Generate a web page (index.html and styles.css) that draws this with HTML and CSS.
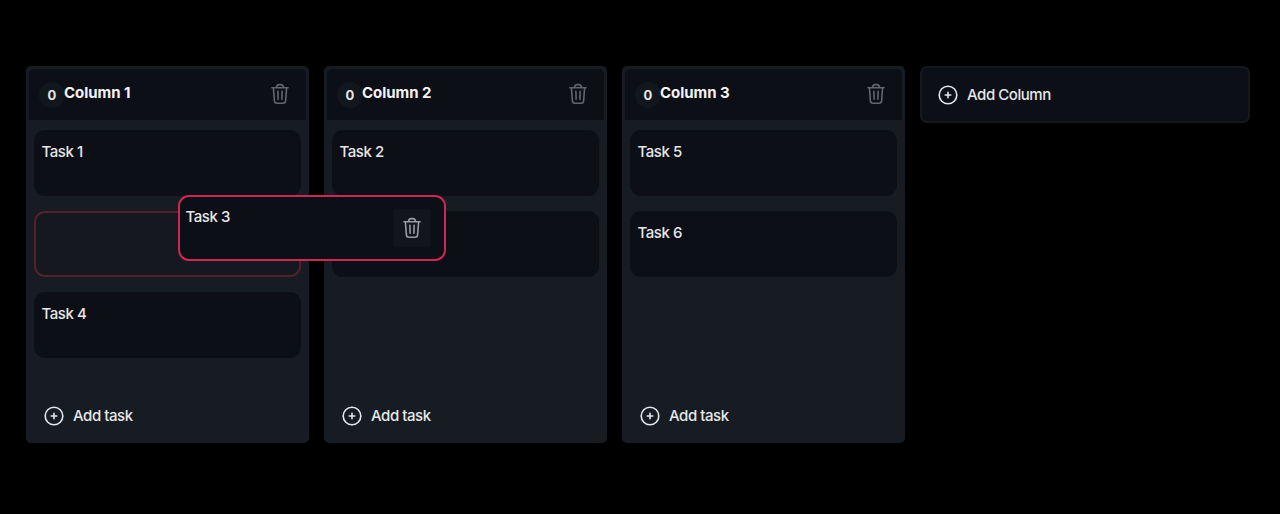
FILE: index.html
```html
<!DOCTYPE html>
<html lang="en">
<head>
<meta charset="utf-8">
<title>Kanban board</title>
<link rel="stylesheet" href="styles.css">
</head>
<body>
<svg class="sprite" aria-hidden="true">
  <symbol id="trash" viewBox="0 0 18 22">
    <path d="M1 4.8H17M2.4 5l1 12.9c.1 1.5.9 2.3 2.4 2.3h6.4c1.5 0 2.3-.8 2.4-2.3L15.6 5M5.4 4.6c.3-2 1.2-3 2.7-3h1.8c1.5 0 2.4 1 2.7 3M6.9 8.3l.2 8M11.1 8.3l-.2 8"/>
  </symbol>
  <symbol id="plus" viewBox="0 0 20 20">
    <circle cx="10" cy="10" r="8.8"/><path d="M10 7.2v5.6M7.2 10h5.6"/>
  </symbol>
</svg>
<main class="board">
  <section class="column">
    <header class="column-header">
      <span class="count">0</span><h2 class="title">Column 1</h2>
      <button class="delete" aria-label="Delete column"><svg class="trash"><use href="#trash"/></svg></button>
    </header>
    <div class="tasks">
      <article class="task">Task 1</article>
      <article class="task placeholder"></article>
      <article class="task">Task 4</article>
    </div>
    <button class="add-task"><svg class="plus"><use href="#plus"/></svg>Add task</button>
  </section>
  <section class="column">
    <header class="column-header">
      <span class="count">0</span><h2 class="title">Column 2</h2>
      <button class="delete" aria-label="Delete column"><svg class="trash"><use href="#trash"/></svg></button>
    </header>
    <div class="tasks">
      <article class="task">Task 2</article>
      <article class="task"></article>
    </div>
    <button class="add-task"><svg class="plus"><use href="#plus"/></svg>Add task</button>
  </section>
  <section class="column">
    <header class="column-header">
      <span class="count">0</span><h2 class="title">Column 3</h2>
      <button class="delete" aria-label="Delete column"><svg class="trash"><use href="#trash"/></svg></button>
    </header>
    <div class="tasks">
      <article class="task">Task 5</article>
      <article class="task">Task 6</article>
    </div>
    <button class="add-task"><svg class="plus"><use href="#plus"/></svg>Add task</button>
  </section>
  <button class="add-column"><svg class="plus"><use href="#plus"/></svg>Add Column</button>
</main>
<article class="task dragged">Task 3
  <button class="task-delete" aria-label="Delete task"><svg class="trash"><use href="#trash"/></svg></button>
</article>
</body>
</html>
```

FILE: styles.css
```css
* { box-sizing: border-box; }
body {
  margin: 0;
  height: 514px;
  overflow: hidden;
  background: #000;
  color: #e6e7e9;
  font: 500 15px/20px Inter, "Liberation Sans", sans-serif;
  letter-spacing: -0.45px;
}
button {
  padding: 0;
  border: 0;
  background: none;
  color: inherit;
  font: inherit;
  letter-spacing: inherit;
}
svg {
  display: block;
  fill: none;
  stroke: currentColor;
  stroke-width: 1.6;
  stroke-linecap: round;
  stroke-linejoin: round;
}
.sprite { position: absolute; width: 0; height: 0; }
.board {
  display: flex;
  align-items: flex-start;
  gap: 15px;
  padding: 66px 30px 0 26px;
}
.column {
  display: flex;
  flex-direction: column;
  flex: none;
  width: 283px;
  height: 377px;
  border-radius: 5px;
  background: #161c22;
}
.column-header {
  display: flex;
  align-items: center;
  height: 51px;
  margin: 3px 3px 0;
  padding: 0 17px 0 10px;
  border-radius: 5px 5px 0 0;
  background: #0d0f17;
}
.count {
  width: 26px;
  height: 26px;
  border-radius: 50%;
  background: #12171c;
  font-size: 13px;
  font-weight: 700;
  letter-spacing: 0;
  line-height: 26px;
  text-align: center;
}
.title {
  margin: 0 auto 3px -1px;
  color: #f4f4f6;
  font-size: 15px;
  font-weight: 700;
  letter-spacing: -0.05px;
}
.trash { width: 18px; height: 22px; }
.delete { margin-bottom: 2px; color: #62656c; }
.tasks {
  display: flex;
  flex: 1;
  flex-direction: column;
  gap: 15px;
  padding: 10px 8px;
}
.task {
  height: 66px;
  padding: 12px 7.5px;
  border-radius: 11px;
  background: #0d0f17;
}
.placeholder {
  border: 2px solid #54202f;
  background: #15181f;
}
.add-task {
  display: flex;
  align-items: center;
  gap: 9px;
  height: 56px;
  padding-left: 18px;
  padding-top: 1px;
}
.plus { width: 20px; height: 20px; }
.add-column {
  display: flex;
  align-items: center;
  gap: 9px;
  width: 330px;
  height: 57px;
  padding-left: 16px;
  border: 2px solid #14191e;
  border-radius: 7px;
  background: #0d0f17;
}
.dragged {
  position: absolute;
  top: 195px;
  left: 178px;
  display: flex;
  justify-content: space-between;
  width: 268px;
  padding: 10px 13px 10px 5.5px;
  border: 2px solid #cc2853;
}
.task-delete {
  display: grid;
  place-items: center;
  width: 38px;
  height: 38px;
  margin-top: 2px;
  border-radius: 4px;
  background: #12151b;
  color: #999ca1;
}
```
